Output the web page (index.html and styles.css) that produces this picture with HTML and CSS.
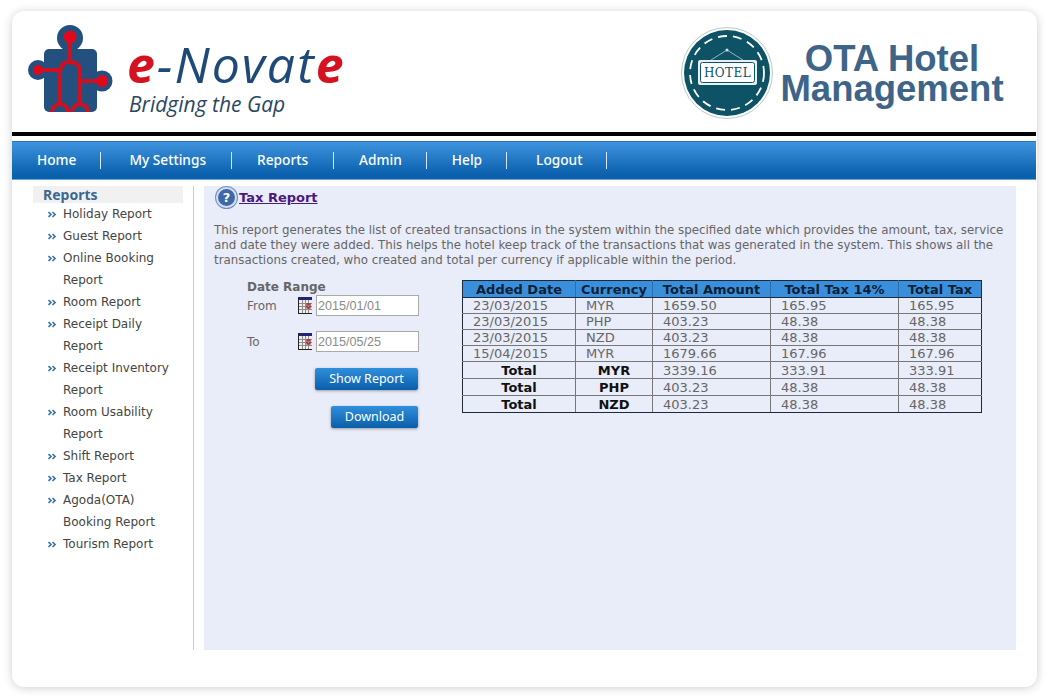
FILE: index.html
```html
<!DOCTYPE html>
<html>
<head>
<meta charset="utf-8">
<title>OTA Hotel Management</title>
<link rel="stylesheet" href="styles.css">
</head>
<body>
<svg class="defs" width="0" height="0">
	<symbol id="bul" viewBox="0 0 8 7">
		<path d="M0.500 1l2.500 2.500l-2.500 2.500M4.500 1l2.500 2.500l-2.500 2.500" fill="none" stroke="#3a76a6" stroke-width="1.700"/>
	</symbol>
	<symbol id="cal" viewBox="0 0 14 17">
		<rect width="14" height="17" fill="#222"/>
		<rect x="1" y="0" width="13" height="16" fill="#f0eeea"/>
		<rect x="1" y="0" width="13" height="3" fill="#23237a"/>
		<path d="M1 6.500h13M1 9.500h13M1 12.500h13M4.500 3v13M7.500 3v13M10.500 3v13" stroke="#8c8c8c" stroke-width="1"/>
		<rect x="9" y="7" width="3" height="4" fill="none" stroke="#b01020" stroke-width="1.200"/>
	</symbol>
</svg>
<div class="page">
	<div class="header">
		<div class="brand">
			<svg class="puzzle" width="100" height="110" viewBox="20 15 100 110">
				<defs><clipPath id="pz"><rect x="44" y="48" width="53" height="63" rx="5"/></clipPath></defs>
				<circle cx="70" cy="37" r="13" fill="#24507f"/>
				<circle cx="38" cy="69" r="10" fill="#24507f"/>
				<circle cx="102" cy="80" r="10.500" fill="#24507f"/>
				<rect x="44" y="48" width="53" height="63" rx="5" fill="#24507f"/>
				<g fill="none" stroke="#cf1020" stroke-width="4">
					<path d="M70 37V61M38 69H60M80 80H102"/>
					<path d="M60 103V72Q60 61 70 61Q80 61 80 72V103"/>
					<g clip-path="url(#pz)">
						<circle cx="60" cy="111" r="8"/>
						<circle cx="80" cy="111" r="8"/>
					</g>
				</g>
				<circle cx="70" cy="36" r="6.500" fill="#e0091c"/>
				<circle cx="38" cy="69" r="5" fill="#e0091c"/>
				<circle cx="102" cy="80" r="6" fill="#e0091c"/>
			</svg>
			<div class="brand_txt">
				<div class="brand_name"><span class="red">e</span>-Novat<span class="red">e</span></div>
				<div class="brand_tag">Bridging the Gap</div>
			</div>
		</div>
		<div class="product">
			<svg width="92" height="92" viewBox="0 0 92 92">
				<circle cx="46" cy="46" r="45.500" fill="#fff" stroke="#b5c9cd"/>
				<circle cx="46" cy="46" r="43" fill="#0e5266"/>
				<circle cx="46" cy="46" r="37" fill="none" stroke="#fff" stroke-width="1.800" stroke-dasharray="9 6"/>
				<path d="M30 33L46 23L62 33" fill="none" stroke="#b8cfd4" stroke-width="0.800"/>
				<circle cx="46" cy="23" r="1.500" fill="#cfe0e4"/>
				<rect x="17" y="33" width="59" height="25" rx="2" fill="#e8f0f1"/>
				<rect x="19.500" y="35.500" width="54" height="20" rx="2" fill="#fff" stroke="#0e5266"/>
				<text class="sign" x="46.500" y="50" text-anchor="middle">HOTEL</text>
			</svg>
			<div class="product_name">OTA Hotel<br>Management</div>
		</div>
	</div>
	<div class="rule"></div>
	<ul class="nav">
		<li><a href="#">Home</a></li>
		<li class="settings"><a href="#">My Settings</a></li>
		<li class="reports"><a href="#">Reports</a></li>
		<li><a href="#">Admin</a></li>
		<li><a href="#">Help</a></li>
		<li class="last"><a href="#">Logout</a></li>
	</ul>
	<div class="body">
		<div class="side">
			<div class="side_tit">Reports</div>
			<ul class="side_list">
				<li><svg class="bul"><use href="#bul"/></svg><a href="#">Holiday Report</a></li>
				<li><svg class="bul"><use href="#bul"/></svg><a href="#">Guest Report</a></li>
				<li><svg class="bul"><use href="#bul"/></svg><a href="#">Online Booking Report</a></li>
				<li><svg class="bul"><use href="#bul"/></svg><a href="#">Room Report</a></li>
				<li><svg class="bul"><use href="#bul"/></svg><a href="#">Receipt Daily Report</a></li>
				<li><svg class="bul"><use href="#bul"/></svg><a href="#">Receipt Inventory Report</a></li>
				<li><svg class="bul"><use href="#bul"/></svg><a href="#">Room Usability Report</a></li>
				<li><svg class="bul"><use href="#bul"/></svg><a href="#">Shift Report</a></li>
				<li><svg class="bul"><use href="#bul"/></svg><a href="#">Tax Report</a></li>
				<li><svg class="bul"><use href="#bul"/></svg><a href="#">Agoda(OTA) Booking Report</a></li>
				<li><svg class="bul"><use href="#bul"/></svg><a href="#">Tourism Report</a></li>
			</ul>
		</div>
		<div class="main">
			<div class="main_tit">
				<span class="help">?</span>
				<a href="#">Tax Report</a>
			</div>
			<p class="intro">This report generates the list of created transactions in the system within the specified date which provides the amount, tax, service and date they were added. This helps the hotel keep track of the transactions that was generated in the system. This shows all the transactions created, who created and total per currency if applicable within the period.</p>
			<div class="report">
				<div class="filter">
					<div class="filter_tit">Date Range</div>
					<div class="filter_row">
						<label>From</label>
						<svg class="cal"><use href="#cal"/></svg>
						<input type="text" value="2015/01/01">
					</div>
					<div class="filter_row">
						<label>To</label>
						<svg class="cal"><use href="#cal"/></svg>
						<input type="text" value="2015/05/25">
					</div>
					<div class="filter_btn"><a href="#" class="btn btn_show">Show Report</a></div>
					<div class="filter_btn"><a href="#" class="btn btn_down">Download</a></div>
				</div>
				<table class="tax">
					<colgroup>
						<col class="c1"><col class="c2"><col class="c3"><col class="c4"><col class="c5">
					</colgroup>
					<tr><th>Added Date</th><th>Currency</th><th>Total Amount</th><th>Total Tax 14%</th><th>Total Tax</th></tr>
					<tr><td>23/03/2015</td><td>MYR</td><td>1659.50</td><td>165.95</td><td>165.95</td></tr>
					<tr><td>23/03/2015</td><td>PHP</td><td>403.23</td><td>48.38</td><td>48.38</td></tr>
					<tr><td>23/03/2015</td><td>NZD</td><td>403.23</td><td>48.38</td><td>48.38</td></tr>
					<tr><td>15/04/2015</td><td>MYR</td><td>1679.66</td><td>167.96</td><td>167.96</td></tr>
					<tr class="sum"><td class="tot">Total</td><td class="tot">MYR</td><td>3339.16</td><td>333.91</td><td>333.91</td></tr>
					<tr class="sum"><td class="tot">Total</td><td class="tot">PHP</td><td>403.23</td><td>48.38</td><td>48.38</td></tr>
					<tr class="sum"><td class="tot">Total</td><td class="tot">NZD</td><td>403.23</td><td>48.38</td><td>48.38</td></tr>
				</table>
			</div>
		</div>
	</div>
</div>
</body>
</html>
```

FILE: styles.css
```css
*{margin:0; padding:0; box-sizing:border-box;}
html,body{height:100%; background:#fff;}
body{font-family:"DejaVu Sans",Verdana,sans-serif; font-size:12px; color:#666; padding:11px 14px 13px 12px; overflow:hidden;}
ul{list-style:none;}
a{text-decoration:none;}
.defs{display:block; height:0;}

.page{height:676px; background:#fff; border-radius:12px; box-shadow:0 1px 10px rgba(0,0,0,.2); overflow:hidden;}

.header{height:121px; display:flex; justify-content:space-between; align-items:center; padding:0 33px 0 8px;}
.brand{display:flex; align-items:flex-start;}
.puzzle{display:block; margin-top:-1px;}
.brand_txt{margin-left:7px; color:#24507f; font-family:"Open Sans",sans-serif; font-style:italic;}
.brand_name{font-size:50px; font-weight:500; line-height:50px; margin-top:22px; letter-spacing:2px; color:#1d4a78;}
.red{color:#d5121f; font-weight:700;}
.brand_tag{font-size:21px; line-height:26px; margin:2px 0 0 2px; color:#2c4660;}
.product{display:flex; align-items:center; margin-top:3px;}
.product svg{display:block; margin-right:7px;}
.product_name{font-family:"Liberation Sans",Arial,sans-serif; font-weight:bold; font-size:36.500px; line-height:30px; color:#3e6489; text-align:center; width:224px; position:relative; top:1px;}
.sign{font-family:"DejaVu Serif",serif; font-size:12px; fill:#0e5266; letter-spacing:.4px;}

.rule{height:9px; border-top:4px solid #000; margin-right:1px;}

.nav{height:39px; margin-right:1px; display:flex; align-items:center; background:linear-gradient(#3f93df,#0c62ae 85%,#0a5fab); border-top:1px solid #2a74b8; border-bottom:1px solid #6aa6d8; padding-left:25px;}
.nav li{height:17px; border-right:1px solid #d8e8f6; display:flex; align-items:center; padding:0 24px 0 25px;}
.nav li:first-child{padding-left:0;}
.nav li.settings{padding:0 25px 0 28px;}
.nav li.reports{padding-right:25px;}
.nav li.last{padding-left:29px;}
.nav a{color:#fff; font-family:"Noto Sans",Tahoma,sans-serif; font-size:13.700px; font-weight:500; position:relative; top:-1px;}

.body{display:flex; margin-top:6px; height:464px;}
.side{width:182px; border-right:1px solid #ccc; padding-left:21px;}
.side_tit{width:150px; height:17px; line-height:17px; background:#f1f1f1; padding-left:10px; color:#3b6791; font-family:"Noto Sans",Tahoma,sans-serif; font-size:14px; font-weight:bold;}
.side_list{padding:0 8px 0 15px;}
.side_list li{display:flex; align-items:flex-start; line-height:22px; color:#444;}
.side_list a{color:#444; width:110px;}
.bul{width:8px; height:7px; margin:8px 7px 0 0; flex:none;}

.main{width:812px; margin-left:10px; background:#e9edf9; padding:0 10px;}
.main_tit{height:23px; display:flex; align-items:center; padding-left:2px; margin-bottom:1px;}
.help{width:21px; height:21px; border-radius:50%; background:#3f68a8; border:2px solid #d5dff0; box-shadow:0 0 0 1px #6f8fbd; color:#fff; font-size:13px; font-weight:bold; line-height:17px; text-align:center; margin-right:2px;}
.main_tit a{color:#4a1a7e; font-size:13px; font-weight:bold; text-decoration:underline;}
.intro{margin-top:14px; line-height:15px; color:#666; font-size:11.850px;}

.report{display:flex; margin-top:12px; align-items:flex-start;}
.filter{width:215px; padding-left:33px;}
.filter_tit{font-size:12px; font-weight:bold; line-height:15px;}
.filter_row{display:flex; align-items:center; height:21px; margin-bottom:15px;}
.filter_row label{width:51px;}
.cal{width:14px; height:17px; margin-right:4px;}
.filter_row input{width:103px; height:21px; border:1px solid #aaa; background:#fff; color:#8a8a8a; font-family:"Liberation Sans",Arial,sans-serif; font-size:12.600px; padding-left:1px;}
.filter_btn{width:171px; text-align:right; height:22px; margin-top:16px; margin-bottom:16px;}
.btn{display:inline-block; height:22px; line-height:21px; color:#fff; font-family:"Noto Sans",Tahoma,sans-serif; font-size:12.500px; text-align:center; background:linear-gradient(#2f8fdd,#0b5ea9); border-radius:2px; box-shadow:0 1px 3px rgba(0,0,0,.35);}
.btn_show{width:103px;}
.btn_down{width:87px;}

.tax{width:519px; margin-left:33px; border-collapse:collapse; table-layout:fixed; border:1px solid #1c2a3a; font-size:13px;}
.c1{width:113px;}
.c2{width:77px;}
.c3{width:118px;}
.c4{width:128px;}
.c5{width:83px;}
.tax th{height:17px; padding:0; background:#3a8fdc; color:#0a1f33; font-weight:bold; line-height:15px; border:1px solid #1c2a3a; border-left-color:#2b6ea8; border-right-color:#2b6ea8;}
.tax th:first-child{border-left-color:#1c2a3a;}
.tax th:last-child{border-right-color:#1c2a3a;}
.tax td{height:16px; line-height:14px; padding:0 0 0 10px; border:1px solid #777; color:#666;}
.tax td:first-child{border-left-color:#1c2a3a;}
.tax td:last-child{border-right-color:#1c2a3a;}
.tax tr:last-child td{border-bottom-color:#1c2a3a;}
.tax .sum td{height:17px; padding-top:2px;}
.tax td.tot{padding:2px 0 0; text-align:center; color:#111; font-weight:bold;}
```
